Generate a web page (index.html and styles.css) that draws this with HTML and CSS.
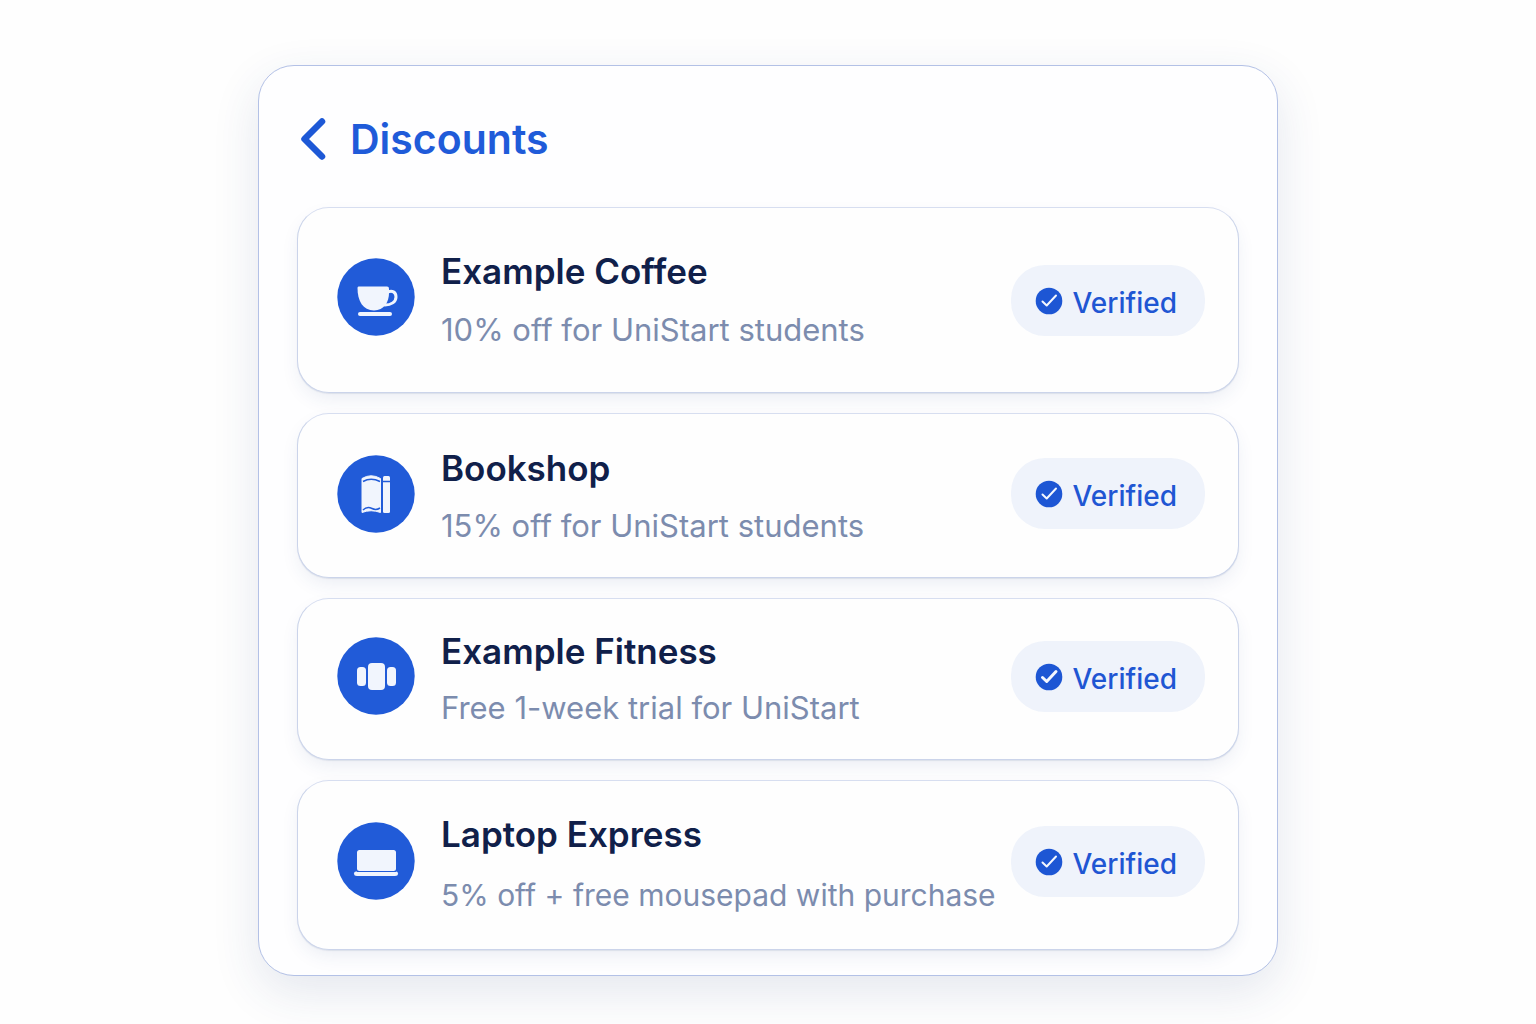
FILE: index.html
```html
<!DOCTYPE html>
<html lang="en">
<head>
<meta charset="utf-8">
<meta name="viewport" content="width=device-width, initial-scale=1">
<title>Discounts</title>
<link rel="stylesheet" href="styles.css">
</head>
<body>
<svg class="sprite" aria-hidden="true">
  <symbol id="check" viewBox="0 0 28 28">
    <circle cx="14" cy="14" r="13.3" fill="#1d56d4"/>
    <path d="M7.5 14.5 11.7 18.5 21 8.5" fill="none" stroke="#f4f7fe" stroke-linecap="round" stroke-linejoin="round"/>
  </symbol>
</svg>
<main class="panel">
  <header class="header">
    <button class="back" type="button" aria-label="Back">
      <svg width="28" height="44" viewBox="0 0 28 44" aria-hidden="true"><path d="M23 4.500 5.500 22 23 39.500" fill="none" stroke="currentColor" stroke-width="6.500" stroke-linecap="round" stroke-linejoin="round"/></svg>
    </button>
    <h1 class="title">Discounts</h1>
  </header>
  <ul class="list">
    <li class="offer offer-featured">
      <svg class="icon" viewBox="0 0 78 78" aria-hidden="true">
        <circle cx="39" cy="39" r="38.700" fill="#215bd8"/>
        <path d="M21.500 28.500H50Q52 28.500 52 30.500V35C52 44 47 52.500 37 52.500C26 52.500 20.500 43 20.500 30Q20.500 28.500 21.500 28.500Z" fill="#f1f5fd"/>
        <path d="M51 34C55 32 59 34 59 39C59 44 54 47 48 47" fill="none" stroke="#f1f5fd" stroke-width="3" stroke-linecap="round"/>
        <rect x="21" y="54" width="34" height="4" rx="2" fill="#f1f5fd"/>
      </svg>
      <div class="details">
        <h2 class="name">Example Coffee</h2>
        <p class="deal">10% off for UniStart students</p>
      </div>
      <span class="badge"><svg class="check" aria-hidden="true"><use href="#check"/></svg>Verified</span>
    </li>
    <li class="offer offer-books">
      <svg class="icon" viewBox="0 0 78 78" aria-hidden="true">
        <circle cx="39" cy="39" r="38.700" fill="#215bd8"/>
        <path d="M25 23.500Q34 18 43.500 23.500V57.500Q34 54 25 57.500Z" fill="#f1f5fd" stroke="#f1f5fd" stroke-linejoin="round"/>
        <path d="M26 26.500Q34 22 43 26.500M26 55Q30 51 35 53.500Q39 55.500 43 53" fill="none" stroke="#215bd8" stroke-width="1.500"/>
        <rect x="46" y="21" width="7" height="37" rx="1.500" fill="#f1f5fd"/>
        <path d="M46 26.500H53" stroke="#215bd8" stroke-width="1.500"/>
      </svg>
      <div class="details">
        <h2 class="name">Bookshop</h2>
        <p class="deal">15% off for UniStart students</p>
      </div>
      <span class="badge"><svg class="check" aria-hidden="true"><use href="#check"/></svg>Verified</span>
    </li>
    <li class="offer offer-fitness">
      <svg class="icon" viewBox="0 0 78 78" aria-hidden="true">
        <circle cx="39" cy="39" r="38.700" fill="#215bd8"/>
        <g fill="#f1f5fd"><rect x="20" y="30" width="9" height="19" rx="3.500"/><rect x="31" y="26" width="17" height="27" rx="4"/><rect x="50" y="30" width="9" height="19" rx="3.500"/></g>
      </svg>
      <div class="details">
        <h2 class="name">Example Fitness</h2>
        <p class="deal">Free 1-week trial for UniStart</p>
      </div>
      <span class="badge"><svg class="check check-bold" aria-hidden="true"><use href="#check"/></svg>Verified</span>
    </li>
    <li class="offer offer-laptop">
      <svg class="icon" viewBox="0 0 78 78" aria-hidden="true">
        <circle cx="39" cy="39" r="38.700" fill="#215bd8"/>
        <rect x="20" y="28" width="39" height="21" rx="2.500" fill="#f1f5fd"/>
        <path d="M19 49.500H59Q61 49.500 61 51.500Q61 54 58 54H20Q17 54 17 51.500Q17 49.500 19 49.500Z" fill="#f1f5fd"/>
        <path d="M20 49.500H59" stroke="#215bd8"/>
      </svg>
      <div class="details">
        <h2 class="name">Laptop Express</h2>
        <p class="deal">5% off + free mousepad with purchase</p>
      </div>
      <span class="badge"><svg class="check" aria-hidden="true"><use href="#check"/></svg>Verified</span>
    </li>
  </ul>
</main>
</body>
</html>
```
FILE: styles.css
```css
* {
  box-sizing: border-box;
}

body {
  margin: 0;
  padding: 65px 24px 48px;
  background: #fefefe;
  color: #10204a;
  font-family: Inter, "Liberation Sans", sans-serif;
}

.sprite {
  display: none;
}

.panel {
  max-width: 1020px;
  margin: 0 auto;
  padding: 41px 38px 25px;
  border: 1px solid #b3c1e6;
  border-radius: 36px;
  background: #fefeff;
  box-shadow: 0 16px 48px rgba(40, 65, 125, 0.12);
}

.header {
  display: flex;
  align-items: center;
  gap: 23px;
  height: 64px;
  margin-bottom: 36px;
  padding-left: 2px;
}

.back {
  display: flex;
  padding: 0;
  border: 0;
  background: none;
  color: #1d58d6;
  cursor: pointer;
}

.title {
  margin: 0;
  color: #1f5bd9;
  font-size: 41px;
  font-weight: 600;
  line-height: 48px;
}

.list {
  display: grid;
  gap: 20px;
  margin: 0;
  padding: 0;
  list-style: none;
}

.offer {
  display: flex;
  align-items: center;
  padding: 31px 33px 31px 39px;
  border: 1px solid #cbd4ea;
  border-top-color: #d7def0;
  border-radius: 32px;
  background: #fefefe;
  box-shadow: 0 8px 20px -4px rgba(40, 65, 125, 0.1), 0 1px 1px rgba(40, 65, 125, 0.1);
}

.icon {
  flex: none;
  width: 78px;
  height: 78px;
  margin: 0 26px 6px 0;
}

.details {
  display: grid;
  flex: 1;
  gap: 16px;
  min-width: 0;
}

.name,
.deal {
  margin: 0;
}

.name {
  font-size: 35px;
  font-weight: 600;
  line-height: 42px;
}

.deal {
  color: #7c8cae;
  font-size: 31px;
  line-height: 40px;
}

.badge {
  display: flex;
  flex: none;
  align-items: center;
  gap: 9px;
  height: 71px;
  margin-bottom: 6px;
  padding: 5px 28px 0 24px;
  border-radius: 34px;
  background: #eff3fb;
  color: #1f56d3;
  font-size: 28px;
  font-weight: 500;
}

.check {
  width: 28px;
  height: 28px;
  margin-bottom: 4px;
  stroke-width: 2px;
}

.check-bold {
  stroke-width: 3px;
}

.offer-featured {
  padding-top: 42px;
  padding-bottom: 42px;
}

.offer-featured .details {
  gap: 18px;
}

.offer-featured .badge {
  margin-bottom: 0;
}

.offer-books {
  padding-top: 33px;
}

.offer-books .details {
  gap: 17px;
}

.offer-laptop {
  padding-top: 32px;
  padding-bottom: 34px;
}

.offer-laptop .details {
  gap: 20px;
}

.offer-laptop .deal {
  font-size: 30px;
}

@media (max-width: 900px) {
  .offer {
    flex-wrap: wrap;
    row-gap: 16px;
  }
}
```
